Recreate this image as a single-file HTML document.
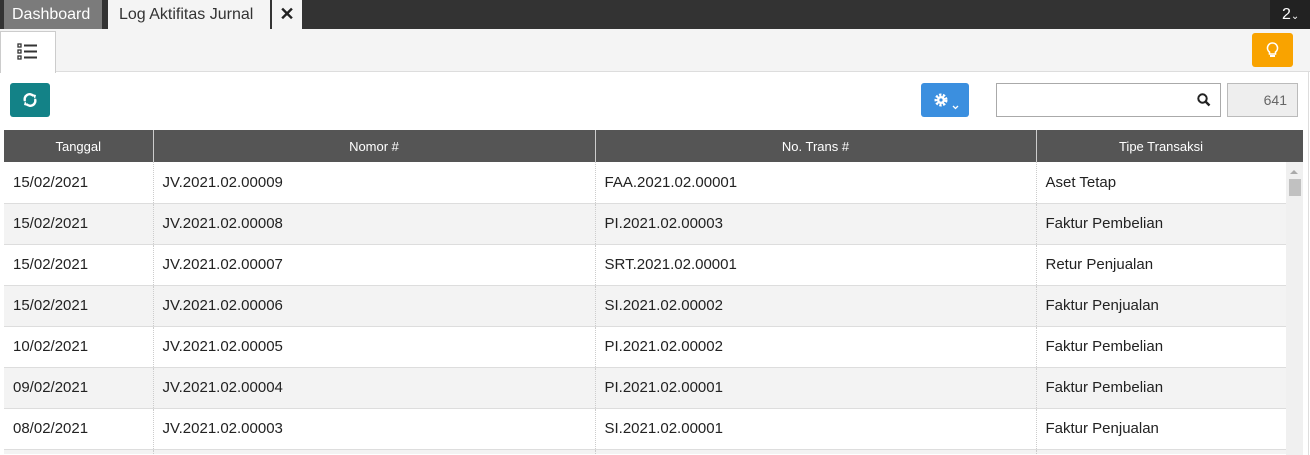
<!DOCTYPE html>
<html><head><meta charset="utf-8"><style>
*{box-sizing:border-box;margin:0;padding:0}
html,body{width:1310px;height:455px;overflow:hidden}
body{background:#fff;font-family:"Liberation Sans",sans-serif;position:relative}
.abs{position:absolute}
.tabbar{left:0;top:0;width:1310px;height:29px;background:#333}
.t{position:absolute;top:0;height:29px;line-height:29px;font-size:16px}
.toolbar{left:0;top:29px;width:1310px;height:43px;background:#f4f4f4;border-bottom:1px solid #ddd}
table{position:absolute;left:4px;top:130px;border-collapse:collapse;table-layout:fixed;width:1282px}
th{background:#555;color:#fff;font-weight:normal;font-size:13px;height:32px;border-right:1px solid #ccc}
td{height:41px;font-size:15px;color:#222;padding-left:9px;border-bottom:1px solid #ddd;border-right:1px dotted #ccc}
tr:nth-child(odd) td{background:#f3f3f3}
tr.last td{height:5px;border-bottom:none}
</style></head><body>
<div class="abs tabbar"></div>
<div class="t" style="left:4px;width:98px;background:#7b7b7b;color:#fff;padding-left:8px">Dashboard</div>
<div class="t" style="left:108px;width:162px;background:#f4f4f4;color:#333;padding-left:11px">Log Aktifitas Jurnal</div>
<div class="t" style="left:272px;width:30px;background:#f4f4f4;color:#222;text-align:center;font-weight:bold;font-size:18px">✕</div>
<div class="t" style="left:1270px;width:40px;background:#222;color:#fff;padding-left:12px">2<span style="font-size:10px">⌄</span></div>
<div class="abs toolbar"></div>
<div class="abs" style="left:0;top:31px;width:56px;height:42px;background:#fff;border:1px solid #ccc;border-bottom:none"></div>
<svg class="abs" style="left:17px;top:43px" width="21" height="17" viewBox="0 0 21 17"><g fill="none" stroke="#333" stroke-width="1.3"><rect x="1" y="1" width="3" height="3"/><rect x="1" y="7" width="3" height="3"/><rect x="1" y="13" width="3" height="3"/></g><g stroke="#333" stroke-width="2"><line x1="7" y1="2.5" x2="20" y2="2.5"/><line x1="7" y1="8.5" x2="20" y2="8.5"/><line x1="7" y1="14.5" x2="20" y2="14.5"/></g></svg>
<div class="abs" style="left:1252px;top:33px;width:41px;height:34px;background:#f9a300;border-radius:3px"></div>
<svg class="abs" style="left:1266px;top:42px" width="13" height="16" viewBox="0 0 13 16"><path d="M6.5 1a5 5 0 0 0-3 9v2h6v-2a5 5 0 0 0-3-9z" fill="none" stroke="#fff" stroke-width="1.6"/><rect x="4" y="13" width="5" height="2" fill="#fff"/></svg>
<div class="abs" style="left:10px;top:83px;width:40px;height:34px;background:#138287;border-radius:3px"></div>
<svg class="abs" style="left:22px;top:93px" width="16" height="14" viewBox="0 0 16 14"><path d="M3 8a5 5 0 0 1 8.5-5M13 6a5 5 0 0 1-8.5 5" fill="none" stroke="#fff" stroke-width="2.4"/><path d="M10 1l4 1-1 4zM6 13l-4-1 1-4z" fill="#fff"/></svg>
<div class="abs" style="left:921px;top:83px;width:48px;height:34px;background:#3b8fdf;border-radius:3px"></div>
<svg class="abs" style="left:933px;top:93px" width="30" height="20" viewBox="0 0 30 20"><circle cx="8" cy="7" r="5" fill="none" stroke="#fff" stroke-width="3" stroke-dasharray="2.2 1.4"/><circle cx="8" cy="7" r="4" fill="#fff"/><circle cx="8" cy="7" r="1.6" fill="#3b8fdf"/><path d="M20 13l2.5 2.5L25 13" fill="none" stroke="#fff" stroke-width="1.3"/></svg>
<div class="abs" style="left:996px;top:83px;width:225px;height:34px;border:1px solid #aaa;background:#fff"></div>
<svg class="abs" style="left:1197px;top:93px" width="14" height="14" viewBox="0 0 14 14"><circle cx="5.5" cy="5.5" r="4.2" fill="none" stroke="#222" stroke-width="2"/><line x1="8.5" y1="8.5" x2="12.5" y2="12.5" stroke="#222" stroke-width="2.4"/></svg>
<div class="abs" style="left:1227px;top:83px;width:71px;height:34px;border:1px solid #bbb;background:#eee;color:#666;font-size:14px;text-align:right;padding-right:10px;line-height:32px">641</div>
<table>
<colgroup><col style="width:149px"><col style="width:442px"><col style="width:441px"><col style="width:250px"></colgroup>
<tr><th>Tanggal</th><th>Nomor #</th><th>No. Trans #</th><th>Tipe Transaksi</th></tr>
<tr><td>15/02/2021</td><td>JV.2021.02.00009</td><td>FAA.2021.02.00001</td><td>Aset Tetap</td></tr>
<tr><td>15/02/2021</td><td>JV.2021.02.00008</td><td>PI.2021.02.00003</td><td>Faktur Pembelian</td></tr>
<tr><td>15/02/2021</td><td>JV.2021.02.00007</td><td>SRT.2021.02.00001</td><td>Retur Penjualan</td></tr>
<tr><td>15/02/2021</td><td>JV.2021.02.00006</td><td>SI.2021.02.00002</td><td>Faktur Penjualan</td></tr>
<tr><td>10/02/2021</td><td>JV.2021.02.00005</td><td>PI.2021.02.00002</td><td>Faktur Pembelian</td></tr>
<tr><td>09/02/2021</td><td>JV.2021.02.00004</td><td>PI.2021.02.00001</td><td>Faktur Pembelian</td></tr>
<tr><td>08/02/2021</td><td>JV.2021.02.00003</td><td>SI.2021.02.00001</td><td>Faktur Penjualan</td></tr>
<tr class="last"><td></td><td></td><td></td><td></td></tr>
</table>
<div class="abs" style="left:1286px;top:130px;width:17px;height:32px;background:#555"></div>
<div class="abs" style="left:1286px;top:162px;width:17px;height:293px;background:#f0f0f0"></div>
<div class="abs" style="left:1290px;top:170px;width:0;height:0;border-left:4px solid transparent;border-right:4px solid transparent;border-bottom:4px solid #aaa"></div>
<div class="abs" style="left:1289px;top:179px;width:12px;height:17px;background:#c1c1c1"></div>
<div class="abs" style="left:1308px;top:72px;width:1px;height:383px;background:#ddd"></div>
</body></html>
